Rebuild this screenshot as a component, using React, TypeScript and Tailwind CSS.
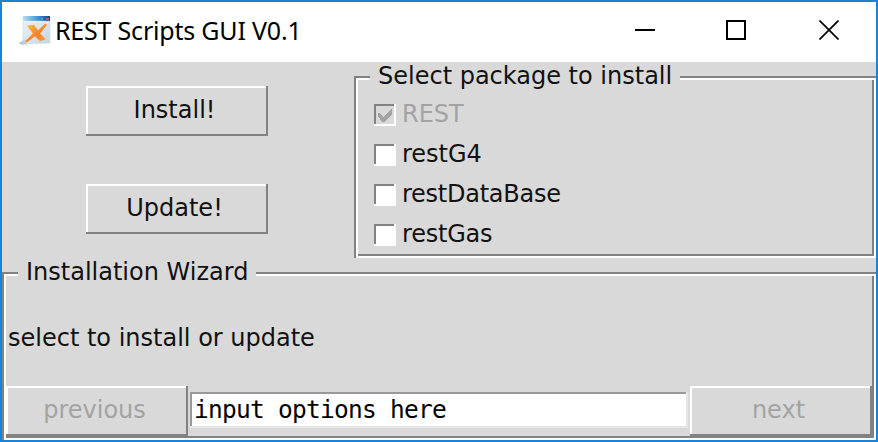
import type { ReactNode } from "react";

const ui = "font-['DejaVu_Sans',sans-serif] text-[24px] leading-[28px] whitespace-nowrap";

function Label({ children, className = "" }: { children: ReactNode; className?: string }) {
  return <span className={`${ui} inline-block ${className}`}>{children}</span>;
}

function Button({ children, disabled = false, className = "" }: { children: ReactNode; disabled?: boolean; className?: string }) {
  return (
    <button
      disabled={disabled}
      className={`flex h-[50px] w-[182px] shrink-0 items-center justify-center pr-[5px] pb-[2px] shadow-[inset_-2px_-2px_0_#828282,inset_2px_2px_0_#ffffff] ${disabled ? "text-[#a3a3a3]" : "text-[#111]"} ${className}`}
    >
      <Label>{children}</Label>
    </button>
  );
}

function Group({ title, legendClass, children, className = "" }: { title: string; legendClass: string; children: ReactNode; className?: string }) {
  return (
    <section className={`relative p-[2px] shadow-[inset_2px_2px_0_#828282,inset_-2px_-2px_0_#ffffff] ${className}`}>
      <div className="h-full p-[2px] shadow-[inset_2px_2px_0_#ffffff,inset_-2px_-2px_0_#828282]">{children}</div>
      <h2 className={`absolute top-[-14px] left-[16px] h-[28px] bg-[#d9d9d9] pl-[8px] text-[#111] ${legendClass}`}>
        <Label>{title}</Label>
      </h2>
    </section>
  );
}

function Check({ label, checked = false, labelClass = "" }: { label: string; checked?: boolean; labelClass?: string }) {
  return (
    <div className={`flex h-[40px] items-center gap-[6px] ${checked ? "text-[#a3a3a3]" : "text-[#111]"}`}>
      <span className={`mt-[2px] size-[22px] p-[2px] shadow-[inset_-2px_-2px_0_#ffffff,inset_2px_2px_0_#828282] ${checked ? "bg-[#d9d9d9]" : "bg-white"}`}>
        {checked && (
          <svg className="size-[18px]" viewBox="0 0 18 18" fill="#a3a3a3">
            <path d="M2 7h2v1h1v1h1v1h1v1h1v-1h1V9h1V8h1V7h1V6h1V5h1V4h1V3h1v6h-1v1h-1v1h-1v1h-1v1h-1v1h-1v1H9v1H6v-1H5v-1H4v-2H3v-1H2z" />
          </svg>
        )}
      </span>
      <Label className={labelClass}>{label}</Label>
    </div>
  );
}

function AppIcon() {
  return (
    <svg className="mb-[3px] h-[31px] w-[34px] shrink-0" viewBox="0 0 34 32" preserveAspectRatio="none">
      <defs>
        <linearGradient id="bar" x1="0" x2="1">
          <stop offset="0" stopColor="#b4dff2" />
          <stop offset=".5" stopColor="#4a9bd8" />
          <stop offset="1" stopColor="#173f91" />
        </linearGradient>
        <linearGradient id="page" x1="0" y1="0" x2="1" y2="1">
          <stop offset="0" stopColor="#f2f7fb" />
          <stop offset="1" stopColor="#c3d6e1" />
        </linearGradient>
        <linearGradient id="cross" x1="0" y1="0" x2="1" y2="1">
          <stop offset="0" stopColor="#ffc247" />
          <stop offset=".6" stopColor="#fa7d22" />
          <stop offset="1" stopColor="#ffae45" />
        </linearGradient>
      </defs>
      <path d="M5 2h27v27L8 30l-7-1q4-1 4-5z" fill="url(#page)" stroke="#d5dfe5" strokeWidth=".7" />
      <path d="M1 28q4 0 5-3l3 5-6 1z" fill="#bccad2" />
      <path d="M5 1h27v5H5z" fill="url(#bar)" />
      <path d="M23 3h2v2h-2z" fill="#45b3ba" />
      <path d="M28 3h3v2h-3z" fill="#d4575f" />
      <path d="M9 11l7-1 4 6 7-7 2 1-7 9 6 6-6 2-5-5-8 6-2-1 8-8z" fill="url(#cross)" />
    </svg>
  );
}

export default function App() {
  return (
    <main className="flex h-[442px] w-[878px] flex-col overflow-hidden border-2 border-[#1883d7] bg-[#d9d9d9]">
      <header className="flex h-[60px] shrink-0 items-center bg-white pl-[16px]">
        <AppIcon />
        <h1 className="mb-[4px] ml-[3px] font-['Noto_Sans','Open_Sans',sans-serif] text-[25px] leading-[32px] tracking-[-0.2px] whitespace-nowrap text-black">
          REST Scripts GUI V0.1
        </h1>
        <div className="mr-[37px] mb-[4px] ml-auto flex h-[20px] shrink-0 items-center">
          <span className="h-[2px] w-[20px] bg-black" />
          <span className="ml-[71px] size-[20px] border-2 border-black" />
          <svg className="ml-[73px] size-[20px]" viewBox="0 0 20 20" stroke="#000" strokeWidth="1.7">
            <path d="M.5.5l19 19M19.5.5l-19 19" />
          </svg>
        </div>
      </header>
      <div className="flex h-[210px] shrink-0">
        <div className="flex w-[352px] flex-col gap-[48px] pt-[24px] pl-[84px]">
          <Button>Install!</Button>
          <Button>Update!</Button>
        </div>
        <Group title="Select package to install" legendClass="w-[310px]" className="mt-[14px] h-[182px] w-[522px]">
          <div className="pt-[14px] pl-[16px]">
            <Check label="REST" checked />
            <Check label="restG4" />
            <Check label="restDataBase" labelClass="tracking-[-0.25px]" />
            <Check label="restGas" labelClass="tracking-[-0.2px]" />
          </div>
        </Group>
      </div>
      <Group title="Installation Wizard" legendClass="w-[238px]" className="h-[168px] shrink-0">
        <div className="flex h-full flex-col justify-between">
          <p className="pt-[48px] pl-[2px] text-[#111]">
            <Label>select to install or update</Label>
          </p>
          <div className="flex h-[50px] items-center">
            <Button disabled>previous</Button>
            <input
              className="mx-[2px] mt-[-2px] h-[36px] min-w-0 flex-1 bg-white px-[4px] font-['DejaVu_Sans_Mono',monospace] text-[24.5px] tracking-[-0.75px] text-black shadow-[inset_-2px_-2px_0_#e6e6e6,inset_2px_2px_0_#999999] outline-none"
              defaultValue="input options here"
            />
            <Button disabled>next</Button>
          </div>
        </div>
      </Group>
    </main>
  );
}
